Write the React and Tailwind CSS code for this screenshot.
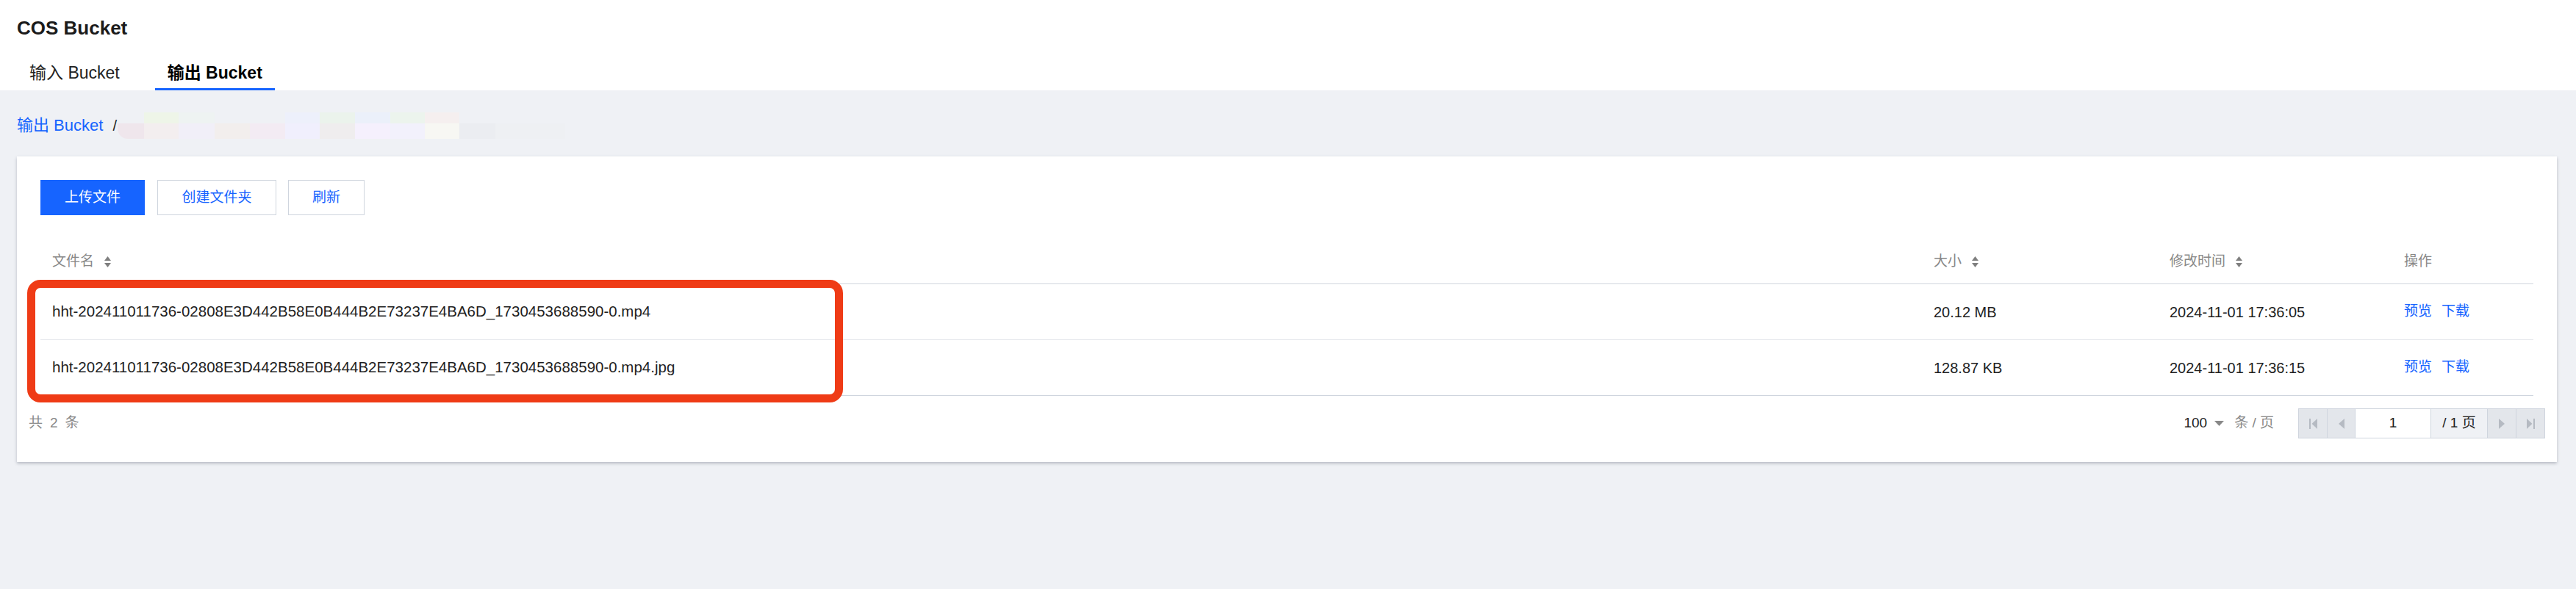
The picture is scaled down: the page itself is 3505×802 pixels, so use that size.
import React from "react";

const FONT = "font-['Liberation_Sans','Noto_Sans_CJK_SC',sans-serif]";

function SortIcon() {
  return (
    <svg width="9" height="15" viewBox="0 0 9 15" className="ml-[14px] shrink-0">
      <polygon points="4.5,0 9,6 0,6" fill="#7f7f7f" />
      <polygon points="0,9 9,9 4.5,15" fill="#7f7f7f" />
    </svg>
  );
}

const mosaicCols = [
  { w: 36, top: null, bot: "#efe6ec", first: true },
  { w: 47, top: "#eef5e8", bot: "#f3eeef" },
  { w: 49, top: "#eef3f2", bot: "#f1eff8" },
  { w: 48, top: null, bot: "#f2eeed" },
  { w: 48, top: null, bot: "#f3ebf3" },
  { w: 47, top: "#edf0fb", bot: "#f0effd" },
  { w: 48, top: "#ebf3ec", bot: "#efedee" },
  { w: 48, top: "#ebf0fa", bot: "#f5f0fd" },
  { w: 47, top: "#ecf4ed", bot: "#f2f1fc" },
  { w: 47, top: "#f5efef", bot: "#f7f7f3" },
  { w: 49, top: null, bot: "#ebedf1" },
  { w: 95, top: null, bot: "#eef0f3" },
];

function Mosaic() {
  return (
    <div className="absolute left-[137px] top-0 flex h-[36px]">
      {mosaicCols.map((c, i) => (
        <div key={i} className="flex flex-col" style={{ width: c.w }}>
          <div className="h-[15px]" style={{ background: c.top || "transparent" }} />
          <div
            className={"h-[21px] " + (c.first ? "rounded-bl-[14px]" : "")}
            style={{ background: c.bot }}
          />
        </div>
      ))}
    </div>
  );
}

function PagerIcon({ kind }) {
  const fill = "#b5bac2";
  if (kind === "first")
    return (
      <svg width="11" height="14" viewBox="0 0 11 14">
        <rect x="0" y="0" width="2" height="14" fill={fill} />
        <polygon points="11,0 11,14 3.5,7" fill={fill} />
      </svg>
    );
  if (kind === "prev")
    return (
      <svg width="8" height="14" viewBox="0 0 8 14">
        <polygon points="8,0 8,14 0,7" fill={fill} />
      </svg>
    );
  if (kind === "next")
    return (
      <svg width="8" height="14" viewBox="0 0 8 14">
        <polygon points="0,0 0,14 8,7" fill={fill} />
      </svg>
    );
  return (
    <svg width="11" height="14" viewBox="0 0 11 14">
      <polygon points="0,0 0,14 7.5,7" fill={fill} />
      <rect x="9" y="0" width="2" height="14" fill={fill} />
    </svg>
  );
}

const rows = [
  {
    name: "hht-202411011736-02808E3D442B58E0B444B2E73237E4BA6D_1730453688590-0.mp4",
    size: "20.12 MB",
    time: "2024-11-01 17:36:05",
  },
  {
    name: "hht-202411011736-02808E3D442B58E0B444B2E73237E4BA6D_1730453688590-0.mp4.jpg",
    size: "128.87 KB",
    time: "2024-11-01 17:36:15",
  },
];

export default function App() {
  return (
    <div className={`${FONT} min-h-[802px] bg-[#eff1f5] text-[#222]`}>
      {/* Top header */}
      <div className="bg-white px-[23px] pt-[24px]">
        <div className="h-[28px] text-[26px] leading-[28px] font-bold text-[#1b1b1b]">
          COS Bucket
        </div>
        <div className="mt-[23px] flex gap-[31px]">
          <div className="flex h-[48px] items-center border-b-[3px] border-transparent px-[17px] pt-[3px] text-[23px] text-[#222]">
            输入 Bucket
          </div>
          <div className="flex h-[48px] items-center border-b-[3px] border-[#1664ff] px-[17px] pt-[3px] text-[23px] font-bold text-black">
            输出 Bucket
          </div>
        </div>
      </div>

      {/* Breadcrumb */}
      <div className="relative mx-[23px] mt-[30px] flex h-[36px] items-center">
        <span className="text-[22px] leading-[22px] text-[#1664ff]">输出 Bucket</span>
        <span className="ml-[13px] text-[20px] leading-[22px] text-[#222]">/</span>
        <Mosaic />
      </div>

      {/* Card */}
      <div className="relative ml-[23px] mr-[26px] mt-[24px] bg-white px-[16px] shadow-[0_2px_4px_rgba(54,58,80,0.3)]">
        <div className="flex px-[16px] pt-[32px]">
          <button className="flex h-[48px] w-[142px] items-center justify-center bg-[#1664ff] text-[19px] text-white">
            上传文件
          </button>
          <button className="ml-[17px] flex h-[48px] w-[162px] items-center justify-center border border-[#cfd5de] bg-white text-[19px] text-[#1664ff]">
            创建文件夹
          </button>
          <button className="ml-[16px] flex h-[48px] w-[104px] items-center justify-center border border-[#cfd5de] bg-white text-[19px] text-[#1664ff]">
            刷新
          </button>
        </div>

        <div className="mt-[34px] px-[16px]">
          <div className="grid h-[60px] grid-cols-[2560px_321px_319px_1fr] items-center border-b border-[#cfd5de] text-[19px] text-[#888]">
            <div className="flex items-center pl-[16px]">
              文件名
              <SortIcon />
            </div>
            <div className="flex items-center pl-[16px]">
              大小
              <SortIcon />
            </div>
            <div className="flex items-center pl-[16px]">
              修改时间
              <SortIcon />
            </div>
            <div className="pl-[16px]">操作</div>
          </div>
          {rows.map((r, i) => (
            <div
              key={i}
              className={
                "grid h-[76px] grid-cols-[2560px_321px_319px_1fr] items-center border-b text-[20px] text-[#1f1f1f] " +
                (i === rows.length - 1 ? "border-[#cfd5de]" : "border-[#e6e8ed]")
              }
            >
              <div className="pl-[16px] text-[20.5px]">{r.name}</div>
              <div className="pl-[16px]">{r.size}</div>
              <div className="pl-[16px]">{r.time}</div>
              <div className="flex gap-[13px] pl-[16px] text-[19px] text-[#1664ff]">
                <span>预览</span>
                <span>下载</span>
              </div>
            </div>
          ))}
        </div>

        {/* Footer */}
        <div className="flex items-center justify-between pb-[32px] pt-[17px]">
          <div className="flex items-center text-[19px] text-[#888]">
            <span>共</span>
            <span className="mx-[10px]">2</span>
            <span>条</span>
          </div>
          <div className="flex items-center">
            <span className="text-[19px] text-[#222]">100</span>
            <svg width="13" height="7" viewBox="0 0 13 7" className="ml-[10px]">
              <polygon points="0,0 13,0 6.5,7" fill="#888" />
            </svg>
            <span className="ml-[14px] text-[19px] text-[#888]">条 / 页</span>
            <div className="ml-[33px] flex h-[41px] border border-[#cfd5de]">
              <div className="flex w-[39px] items-center justify-center border-r border-[#cfd5de] bg-[#e3e6eb]">
                <PagerIcon kind="first" />
              </div>
              <div className="flex w-[38px] items-center justify-center border-r border-[#cfd5de] bg-[#e3e6eb]">
                <PagerIcon kind="prev" />
              </div>
              <div className="flex w-[103px] items-center justify-center border-r border-[#cfd5de] bg-white text-[19px] text-[#222]">
                1
              </div>
              <div className="flex w-[77px] items-center justify-center border-r border-[#cfd5de] bg-[#eff1f5] text-[19px] text-[#222]">
                / 1 页
              </div>
              <div className="flex w-[39px] items-center justify-center border-r border-[#cfd5de] bg-[#e3e6eb]">
                <PagerIcon kind="next" />
              </div>
              <div className="flex w-[38px] items-center justify-center bg-[#e3e6eb]">
                <PagerIcon kind="last" />
              </div>
            </div>
          </div>
        </div>

        {/* Red annotation box */}
        <div className="pointer-events-none absolute left-[14px] top-[168px] h-[167px] w-[1110px] rounded-[18px] border-[11px] border-[#ef3b16]" />
      </div>
    </div>
  );
}
